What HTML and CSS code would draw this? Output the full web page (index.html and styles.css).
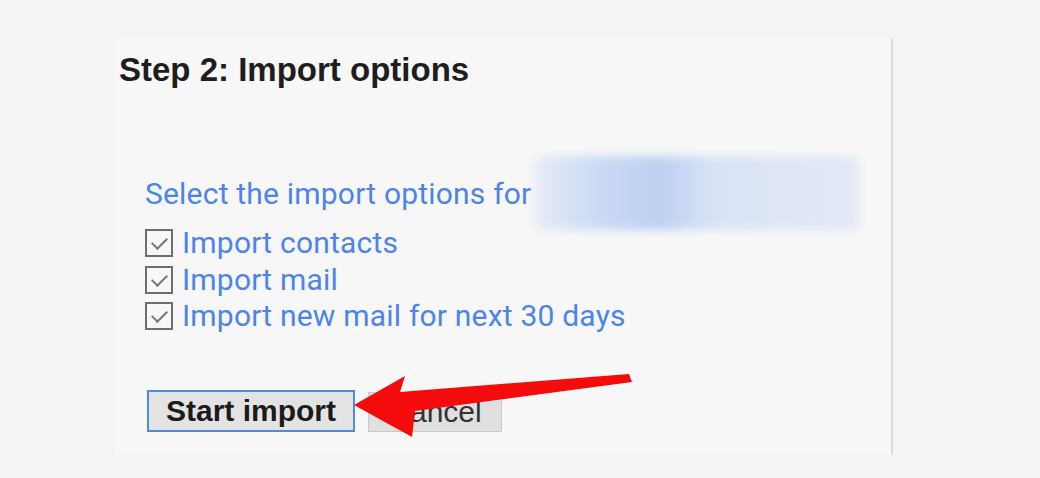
FILE: index.html
```html
<!DOCTYPE html>
<html lang="en">
<head>
    <meta charset="UTF-8">
    <title>Import options</title>
    <link rel="stylesheet" href="styles.css">
</head>
<body>
    <div class="panel">
        <h2 class="step-title">Step 2: Import options</h2>

        <div class="options">
            <div class="select-line">
                <span>Select the import options for</span>
                <span class="account-blur"></span>
            </div>
            <label class="option"><span class="check"></span>Import contacts</label>
            <label class="option"><span class="check"></span>Import mail</label>
            <label class="option"><span class="check"></span>Import new mail for next 30 days</label>
        </div>

        <div class="actions">
            <button class="btn btn-primary">Start import</button>
            <button class="btn btn-cancel">Cancel</button>
            <svg class="arrow" width="300" height="80" viewBox="0 0 300 80">
                <polygon points="1,44 52,15 47,31 276,13 279,21 62,50 59,76" fill="#f40b0b"/>
            </svg>
        </div>
    </div>
</body>
</html>
```

FILE: styles.css
```css
* {
    margin: 0;
    padding: 0;
    box-sizing: border-box;
}

body {
    background-color: #f4f4f4;
    font-family: Roboto, Arial, sans-serif;
    padding: 39px 0 0 115px;
    height: 478px;
    overflow: hidden;
}

.panel {
    width: 778px;
    height: 416px;
    background-color: #f7f7f7;
    border-right: 2px solid #dcdcdc;
    padding: 14px 0 0 4px;
}

.step-title {
    font-family: "Liberation Sans", Arial, sans-serif;
    font-weight: bold;
    font-size: 33px;
    line-height: 33px;
    color: #1e1e1e;
}

.options {
    margin-top: 81px;
    padding-left: 26px;
    color: #4d84ec;
    font-size: 30px;
    letter-spacing: 0.2px;
}

.select-line {
    display: flex;
    align-items: center;
    height: 52px;
    margin-bottom: 6px;
}

.account-blur {
    width: 324px;
    height: 74px;
    margin-left: 4px;
    background: linear-gradient(90deg, #e6ebf6 0%, #cbdaf4 20%, #bcd0f2 38%, #d9e3f6 55%, #e3e9f6 100%);
    border-radius: 6px;
    filter: blur(4px);
}

.option {
    display: flex;
    align-items: center;
    height: 36.5px;
    line-height: 36px;
}

.check {
    width: 28px;
    height: 28px;
    border: 2px solid #6e6e6e;
    margin-right: 9px;
    position: relative;
    flex-shrink: 0;
}

.check::after {
    content: "";
    position: absolute;
    left: 8px;
    top: 3px;
    width: 7px;
    height: 13px;
    border-right: 2px solid #777;
    border-bottom: 2px solid #777;
    transform: rotate(45deg);
}

.actions {
    margin-top: 55px;
    padding-left: 28px;
    display: flex;
    align-items: center;
    gap: 13px;
    position: relative;
}

.btn {
    font-family: "Liberation Sans", Arial, sans-serif;
    font-size: 30px;
    height: 42px;
    cursor: pointer;
}

.btn-primary {
    width: 208px;
    background-color: #e3e3e3;
    border: 2px solid #4a8be4;
    font-weight: bold;
    color: #1b1b1b;
}

.btn-cancel {
    width: 134px;
    height: 40px;
    margin-top: 2px;
    background-color: #e0e0e0;
    border: 1px solid #c9c9c9;
    color: #333;
}

.arrow {
    position: absolute;
    left: 234px;
    top: -29px;
}
```
